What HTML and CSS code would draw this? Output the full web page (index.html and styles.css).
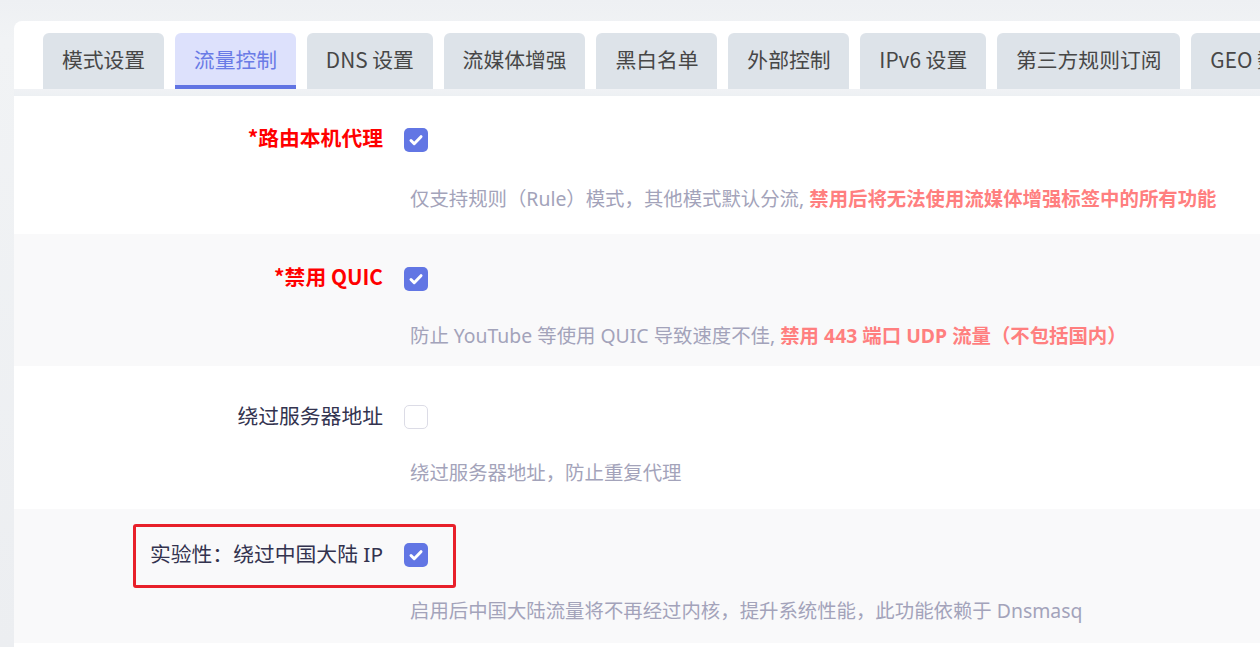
FILE: index.html
```html
<!DOCTYPE html>
<html lang="zh-CN">
<head>
<meta charset="utf-8">
<title>流量控制</title>
<link rel="stylesheet" href="styles.css">
</head>
<body>
<div class="page">
  <div class="card">
    <div class="tabs">
      <div class="tab">模式设置</div>
      <div class="tab active">流量控制</div>
      <div class="tab">DNS 设置</div>
      <div class="tab">流媒体增强</div>
      <div class="tab">黑白名单</div>
      <div class="tab">外部控制</div>
      <div class="tab">IPv6 设置</div>
      <div class="tab">第三方规则订阅</div>
      <div class="tab">GEO 数据库订阅</div>
    </div>
    <div class="band"></div>
    <div class="section">
      <div class="row row1">
        <div class="line">
          <label class="label required">*路由本机代理</label>
          <span class="cb checked"><svg viewBox="0 0 24 24" width="24" height="24"><path d="M7 12.5l3.2 3.2 6.8-7" fill="none" stroke="#fff" stroke-width="3" stroke-linecap="round" stroke-linejoin="round"/></svg></span>
        </div>
        <div class="desc">仅支持规则（Rule）模式，其他模式默认分流, <b class="warn">禁用后将无法使用流媒体增强标签中的所有功能</b></div>
      </div>
      <div class="row row2 alt">
        <div class="line">
          <label class="label required">*禁用 QUIC</label>
          <span class="cb checked"><svg viewBox="0 0 24 24" width="24" height="24"><path d="M7 12.5l3.2 3.2 6.8-7" fill="none" stroke="#fff" stroke-width="3" stroke-linecap="round" stroke-linejoin="round"/></svg></span>
        </div>
        <div class="desc">防止 YouTube 等使用 QUIC 导致速度不佳, <b class="warn">禁用 443 端口 UDP 流量（不包括国内）</b></div>
      </div>
      <div class="row row3">
        <div class="line">
          <label class="label">绕过服务器地址</label>
          <span class="cb"></span>
        </div>
        <div class="desc">绕过服务器地址，防止重复代理</div>
      </div>
      <div class="row row4 alt">
        <div class="line">
          <label class="label">实验性：绕过中国大陆 IP</label>
          <span class="cb checked"><svg viewBox="0 0 24 24" width="24" height="24"><path d="M7 12.5l3.2 3.2 6.8-7" fill="none" stroke="#fff" stroke-width="3" stroke-linecap="round" stroke-linejoin="round"/></svg></span>
        </div>
        <div class="desc">启用后中国大陆流量将不再经过内核，提升系统性能，此功能依赖于 Dnsmasq</div>
        <div class="highlight"></div>
      </div>
    </div>
  </div>
</div>
</body>
</html>
```
FILE: styles.css
```css
html, body {
  margin: 0;
  padding: 0;
  overflow: hidden;
}
body {
  background: linear-gradient(#eef0f3, #f1f3f5 40px, #eceef1);
  font-family: "Noto Sans", "Noto Sans CJK SC", sans-serif;
  height: 647px;
}
.page {
  padding: 21px 0 0 14px;
}
.card {
  background: #fff;
  border-radius: 8px 0 0 0;
  overflow: hidden;
  height: 640px;
}
.tabs {
  display: flex;
  gap: 11px;
  padding: 12px 0 0 29px;
  white-space: nowrap;
}
.tab {
  flex: none;
  height: 56px;
  box-sizing: border-box;
  padding: 0 18.9px 5px;
  display: flex;
  align-items: center;
  background: #dde3e9;
  color: #474747;
  font-family: "Noto Sans CJK SC", sans-serif;
  font-size: 20.8px;
  border-radius: 6px 6px 0 0;
}
.tab.active {
  background: #dde1fc;
  color: #6a7be6;
  border-bottom: 4px solid #6174e3;
  padding-bottom: 1px;
}
.band {
  height: 7px;
  background: linear-gradient(#f0f2f5, #edf0f3);
}
.row {
  position: relative;
  background: #fff;
}
.row.alt {
  background: #f9f9fa;
}
.row1 { padding: 32px 0 20px; }
.row2 { padding: 33px 0 15px; }
.row3 { padding: 39px 0 21px; }
.row4 { padding: 34px 0 17px; }
.line {
  display: flex;
  align-items: center;
  height: 24px;
}
.label {
  width: 369px;
  text-align: right;
  font-size: 20.8px;
  color: #33334f;
  padding-bottom: 5px;
}
.label.required {
  color: #ff0000;
  font-weight: 700;
  font-family: "Noto Sans CJK SC", sans-serif;
  padding-bottom: 6px;
}
.cb {
  width: 24px;
  height: 24px;
  box-sizing: border-box;
  margin-left: 21px;
  border-radius: 5px;
  border: 1px solid #dcdce6;
  background: #fff;
  display: block;
}
.cb.checked {
  background: #6276e4;
  border: none;
}
.cb svg {
  display: block;
}
.desc {
  margin: 32px 0 0 396px;
  height: 30px;
  line-height: 30px;
  font-size: 19.4px;
  color: #a3a3ba;
  white-space: nowrap;
}
.row2 .desc { margin-top: 30px; }
.row3 .desc { margin-top: 29px; }
.row4 .desc { margin-top: 29px; }
.warn {
  color: #ff7f7f;
  font-weight: 700;
}
.highlight {
  position: absolute;
  left: 119px;
  top: 15px;
  width: 323px;
  height: 64px;
  box-sizing: border-box;
  border: 3px solid #e8202a;
  border-radius: 3px;
}
```
